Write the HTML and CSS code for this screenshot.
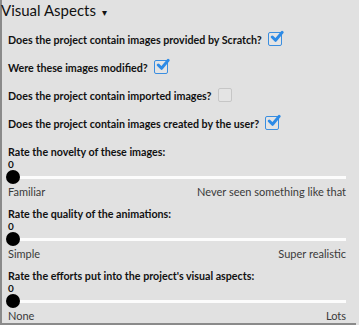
FILE: index.html
```html
<!DOCTYPE html>
<html lang="en">
<head>
    <meta charset="UTF-8">
    <title>Visual Aspects</title>
    <link rel="stylesheet" href="styles.css">
</head>
<body>
    <div class="panel">
        <div class="header">
            <span class="title">Visual Aspects</span>
            <span class="caret">&#9662;</span>
        </div>

        <div class="questions">
            <div class="question">
                <span>Does the project contain images provided by Scratch?</span>
                <span class="check checked"><svg viewBox="0 0 16 16"><path d="M3.5 7.5 L7 11 L14 2.5"/></svg></span>
            </div>
            <div class="question">
                <span>Were these images modified?</span>
                <span class="check checked"><svg viewBox="0 0 16 16"><path d="M3.5 7.5 L7 11 L14 2.5"/></svg></span>
            </div>
            <div class="question">
                <span>Does the project contain imported images?</span>
                <span class="check"></span>
            </div>
            <div class="question">
                <span>Does the project contain images created by the user?</span>
                <span class="check checked"><svg viewBox="0 0 16 16"><path d="M3.5 7.5 L7 11 L14 2.5"/></svg></span>
            </div>
        </div>

        <div class="rating">
            <div class="rating-label">Rate the novelty of these images:</div>
            <div class="rating-value">0</div>
            <div class="slider"><span class="thumb"></span></div>
            <div class="range-labels"><span>Familiar</span><span>Never seen something like that</span></div>
        </div>
        <div class="rating">
            <div class="rating-label">Rate the quality of the animations:</div>
            <div class="rating-value">0</div>
            <div class="slider"><span class="thumb"></span></div>
            <div class="range-labels"><span>Simple</span><span>Super realistic</span></div>
        </div>
        <div class="rating">
            <div class="rating-label">Rate the efforts put into the project's visual aspects:</div>
            <div class="rating-value">0</div>
            <div class="slider"><span class="thumb"></span></div>
            <div class="range-labels"><span>None</span><span>Lots</span></div>
        </div>
    </div>
</body>
</html>
```

FILE: styles.css
```css
* {
    margin: 0;
    padding: 0;
    box-sizing: border-box;
}

body {
    font-family: Lato, 'Noto Sans', sans-serif;
    background: #e1e1e1;
    color: #111;
    width: 359px;
    height: 325px;
    overflow: hidden;
}

.panel {
    width: 356px;
    height: 325px;
    border-left: 2px solid #8a8a8a;
    border-bottom: 2px solid #8a8a8a;
    display: flex;
    flex-direction: column;
}

.header {
    display: flex;
    align-items: center;
    height: 21px;
    margin-left: -1px;
}

.title {
    font-size: 15px;
    line-height: 21px;
}

.caret {
    font-size: 10px;
    margin-left: 6px;
    margin-top: 2px;
}

.questions {
    margin-top: 4px;
}

.question {
    display: flex;
    align-items: center;
    gap: 6px;
    height: 28px;
    padding-left: 6px;
    font-size: 10.7px;
    font-weight: 700;
}

.check {
    position: relative;
    width: 14px;
    height: 14px;
    border: 1.5px solid #c6c6c6;
    border-radius: 2px;
    background: #e4e4e4;
}

.check.checked {
    border-color: #3a8ee0;
}

.check svg {
    position: absolute;
    left: 0;
    top: -3px;
    width: 15px;
    height: 15px;
    fill: none;
    stroke: #2c8ae6;
    stroke-width: 3.2;
    stroke-linecap: round;
    stroke-linejoin: round;
}

.rating {
    padding-left: 6px;
    padding-right: 10px;
}

.rating-label {
    font-size: 10.7px;
    font-weight: 700;
    line-height: 14px;
    margin-top: 8px;
}

.rating-value {
    font-size: 10px;
    font-weight: 700;
    line-height: 11px;
}

.slider {
    position: relative;
    height: 14px;
    display: flex;
    align-items: center;
}

.slider::before {
    content: "";
    flex: 1;
    height: 3px;
    margin-left: 4px;
    background: #fcfcfc;
}

.thumb {
    position: absolute;
    left: -2px;
    top: 0;
    width: 14px;
    height: 14px;
    border-radius: 50%;
    background: #000;
}

.range-labels {
    display: flex;
    justify-content: space-between;
    font-size: 11px;
    color: #3a3a3a;
    line-height: 15px;
}
```
